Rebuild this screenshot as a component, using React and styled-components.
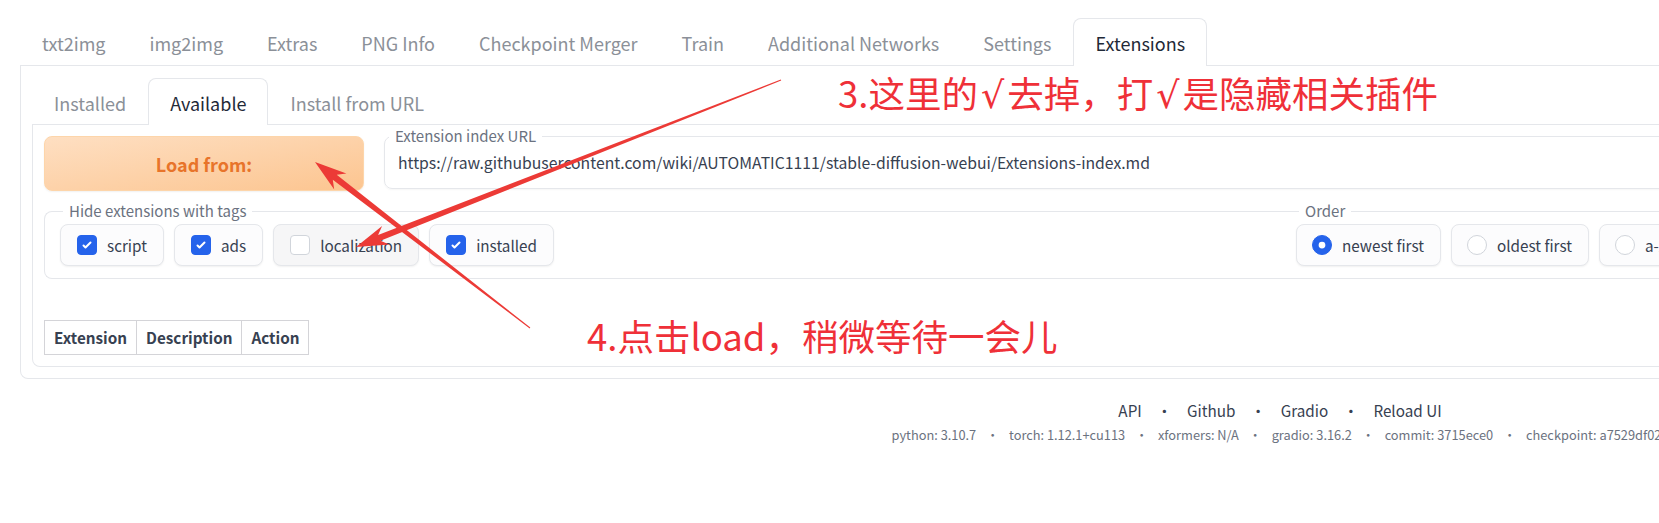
import React from "react";
import styled, { createGlobalStyle } from "styled-components";

const GlobalStyle = createGlobalStyle`
  html, body {
    margin: 0;
    padding: 0;
    background: #fff;
    overflow: hidden;
  }
  body {
    font-family: "Noto Sans CJK SC", "Liberation Sans", sans-serif;
    color: #1f2937;
  }
`;

const Page = styled.div`
  position: relative;
  width: 2560px;
  padding: 18px 20px 0;
  box-sizing: border-box;
`;

const TabNav = styled.div`
  display: flex;
  border-bottom: 1px solid #e5e7eb;
`;

const Tab = styled.div`
  box-sizing: border-box;
  height: ${(p) => (p.$small ? "47px" : "48px")};
  padding: 1px 21px 0;
  margin-bottom: -1px;
  display: flex;
  align-items: center;
  font-size: 18px;
  line-height: 24px;
  white-space: nowrap;
  color: ${(p) => (p.$active ? "#1f2937" : "#8b9098")};
  background: ${(p) => (p.$active ? "#fff" : "transparent")};
  border: 1px solid ${(p) => (p.$active ? "#e5e7eb" : "transparent")};
  border-bottom: none;
  border-radius: 8px 8px 0 0;
`;

const Panel = styled.div`
  border: 1px solid #e5e7eb;
  border-top: none;
  border-radius: 0 0 8px 8px;
  padding: ${(p) => p.$pad};
`;

const LoadRow = styled.div`
  display: flex;
  align-items: flex-start;
  gap: 20px;
`;

const LoadButton = styled.button`
  flex: 0 0 320px;
  height: 55px;
  border: 1px solid #fdd5aa;
  border-radius: 8px;
  background: linear-gradient(to bottom right, #fedfc2, #fcc590);
  box-shadow: 0 1px 2px rgba(0, 0, 0, 0.06);
  color: #e8742a;
  font-family: inherit;
  font-size: 18px;
  font-weight: 600;
  line-height: 24px;
`;

const Field = styled.fieldset`
  margin: -10px 0 0;
  padding: 0 0 13px;
  min-width: 0;
  border: 1px solid #e5e7eb;
  border-radius: 8px;
  background: #fff;
  box-shadow: 0 1px 2px rgba(0, 0, 0, 0.04);
  flex: 1;
`;

const Legend = styled.legend`
  margin-left: ${(p) => p.$offset || "3px"};
  padding: 0 6px;
  font-size: 15px;
  line-height: 20px;
  color: #6b7280;
  white-space: nowrap;
`;

const UrlText = styled.div`
  margin-top: 5px;
  padding: 0 13px;
  font-size: 15.75px;
  line-height: 24px;
  color: #374151;
  white-space: nowrap;
`;

const Filters = styled.div`
  display: grid;
  grid-template-columns: 1fr 1fr;
  margin-top: 10px;
`;

const Group = styled.fieldset`
  margin: 0;
  padding: 3px 16px 12px;
  min-width: 0;
  border: none;
  border-top: 1px solid #e5e7eb;
  border-bottom: 1px solid #e5e7eb;
  border-left: ${(p) => (p.$first ? "1px solid #e5e7eb" : "none")};
  border-radius: ${(p) => (p.$first ? "8px 0 0 8px" : "0")};
  padding-left: ${(p) => (p.$first ? "15px" : "16px")};
`;

const ChipRow = styled.div`
  display: flex;
  gap: 10px;
`;

const Chip = styled.label`
  box-sizing: border-box;
  height: 42px;
  padding: 0 16px 1px ${(p) => p.$left || "16px"};
  display: flex;
  align-items: center;
  gap: 10px;
  border: 1px solid #e5e7eb;
  border-radius: 8px;
  background: ${(p) => (p.$muted ? "#f6f6f7" : "#fcfcfd")};
  box-shadow: 0 1px 2px rgba(0, 0, 0, 0.06);
  font-size: 15.25px;
  line-height: 24px;
  color: #374151;
  white-space: nowrap;
`;

const Box = styled.span`
  box-sizing: border-box;
  width: 20px;
  height: 20px;
  border-radius: ${(p) => (p.$round ? "50%" : "4px")};
  border: 1px solid ${(p) => (p.$on ? "#2563eb" : "#d1d5db")};
  background: ${(p) => (p.$on ? "#2563eb" : "#fff")};
  display: flex;
  align-items: center;
  justify-content: center;
  flex: none;
`;

const Table = styled.table`
  margin-top: 41px;
  border-collapse: collapse;
  font-size: 15.25px;
`;

const Th = styled.th`
  box-sizing: border-box;
  height: 34px;
  padding: 0 9px 2px;
  border: 1px solid #d4d4d8;
  font-weight: 600;
  color: #374151;
  text-align: left;
  line-height: 24px;
`;

const Footer = styled.div`
  margin-top: 19px;
  text-align: center;
`;

const Links = styled.div`
  font-size: 15.25px;
  line-height: 24px;
  color: #374151;
`;

const Versions = styled.div`
  margin-top: 3px;
  font-size: 12.8px;
  line-height: 20px;
  color: #6b7280;
`;

const Dot = styled.span`
  margin: 0 ${(p) => p.$gap};
`;

const Note = styled.div`
  position: absolute;
  left: ${(p) => p.$x}px;
  top: ${(p) => p.$y}px;
  font-family: "Noto Sans CJK SC", sans-serif;
  font-size: 36.5px;
  line-height: 1;
  color: #ef3038;
  white-space: nowrap;
`;

const Radical = styled.span`
  font-family: "DejaVu Sans", sans-serif;
  margin: 0 3px;
`;

const Overlay = styled.svg`
  position: absolute;
  left: 0;
  top: 0;
  pointer-events: none;
`;

const mainTabs = [
  "txt2img",
  "img2img",
  "Extras",
  "PNG Info",
  "Checkpoint Merger",
  "Train",
  "Additional Networks",
  "Settings",
  "Extensions",
];

const subTabs = ["Installed", "Available", "Install from URL"];

const tags = [
  { name: "script", on: true },
  { name: "ads", on: true },
  { name: "localization", on: false },
  { name: "installed", on: true },
];

const orders = [
  { name: "newest first", on: true },
  { name: "oldest first", on: false },
  { name: "a-z", on: false },
  { name: "z-a", on: false },
];

const versions = [
  "python: 3.10.7",
  "torch: 1.12.1+cu113",
  "xformers: N/A",
  "gradio: 3.16.2",
  "commit: 3715ece0",
  "checkpoint: a7529df023",
];

const arrows = [
  { from: [530, 328], to: [315, 162] },
  { from: [781, 80], to: [356, 247] },
];

function arrowPoints([x1, y1], [x2, y2]) {
  const len = Math.hypot(x2 - x1, y2 - y1);
  const ux = (x2 - x1) / len;
  const uy = (y2 - y1) / len;
  const nx = -uy;
  const ny = ux;
  const head = 32;
  const neck = 25;
  const wing = 10;
  const shaft = 3.2;
  const tail = 0.5;
  const bx = x2 - ux * head;
  const by = y2 - uy * head;
  const jx = x2 - ux * neck;
  const jy = y2 - uy * neck;
  const p = (x, y) => `${x.toFixed(1)},${y.toFixed(1)}`;
  return [
    p(x1 + nx * tail, y1 + ny * tail),
    p(jx + nx * shaft, jy + ny * shaft),
    p(bx + nx * wing, by + ny * wing),
    p(x2, y2),
    p(bx - nx * wing, by - ny * wing),
    p(jx - nx * shaft, jy - ny * shaft),
    p(x1 - nx * tail, y1 - ny * tail),
  ].join(" ");
}

const Check = () => (
  <svg width="16" height="16" viewBox="0 0 16 16">
    <path
      fill="#fff"
      d="M12.207 4.793a1 1 0 010 1.414l-5 5a1 1 0 01-1.414 0l-2-2a1 1 0 011.414-1.414L6.5 9.086l4.293-4.293a1 1 0 011.414 0z"
    />
  </svg>
);

const Radio = () => (
  <svg width="20" height="20" viewBox="0 0 16 16">
    <circle cx="8" cy="8" r="3" fill="#fff" />
  </svg>
);

export default function App() {
  return (
    <>
      <GlobalStyle />
      <Page>
        <TabNav>
          {mainTabs.map((t) => (
            <Tab key={t} $active={t === "Extensions"}>
              {t}
            </Tab>
          ))}
        </TabNav>
        <Panel $pad="12px 11px 11px">
          <TabNav>
            {subTabs.map((t) => (
              <Tab key={t} $small $active={t === "Available"}>
                {t}
              </Tab>
            ))}
          </TabNav>
          <Panel $pad="11px 11px 11px">
            <LoadRow>
              <LoadButton>Load from:</LoadButton>
              <Field>
                <Legend $offset="4px">Extension index URL</Legend>
                <UrlText>
                  https://raw.githubusercontent.com/wiki/AUTOMATIC1111/stable-diffusion-webui/Extensions-index.md
                </UrlText>
              </Field>
            </LoadRow>
            <Filters>
              <Group $first>
                <Legend>Hide extensions with tags</Legend>
                <ChipRow>
                  {tags.map((t) => (
                    <Chip key={t.name} $muted={!t.on}>
                      <Box $on={t.on}>{t.on && <Check />}</Box>
                      {t.name}
                    </Chip>
                  ))}
                </ChipRow>
              </Group>
              <Group>
                <Legend>Order</Legend>
                <ChipRow>
                  {orders.map((o) => (
                    <Chip key={o.name} $left="15px">
                      <Box $round $on={o.on}>{o.on && <Radio />}</Box>
                      {o.name}
                    </Chip>
                  ))}
                </ChipRow>
              </Group>
            </Filters>
            <Table>
              <thead>
                <tr>
                  <Th>Extension</Th>
                  <Th>Description</Th>
                  <Th>Action</Th>
                </tr>
              </thead>
            </Table>
          </Panel>
        </Panel>
        <Footer>
          <Links>
            API<Dot $gap="15px">•</Dot>Github<Dot $gap="15px">•</Dot>Gradio
            <Dot $gap="15px">•</Dot>Reload UI
          </Links>
          <Versions>
            {versions.map((v, i) => (
              <React.Fragment key={v}>
                {i > 0 && <Dot $gap="10px">•</Dot>}
                {v}
              </React.Fragment>
            ))}
          </Versions>
        </Footer>
        <Note $x={838} $y={75}>
          3.这里的<Radical>√</Radical>去掉，打<Radical>√</Radical>是隐藏相关插件
        </Note>
        <Note $x={587} $y={318}>4.点击load，稍微等待一会儿</Note>
        <Overlay width="1659" height="523">
          {arrows.map((a, i) => (
            <polygon key={i} points={arrowPoints(a.from, a.to)} fill="#ec3a36" />
          ))}
        </Overlay>
      </Page>
    </>
  );
}
